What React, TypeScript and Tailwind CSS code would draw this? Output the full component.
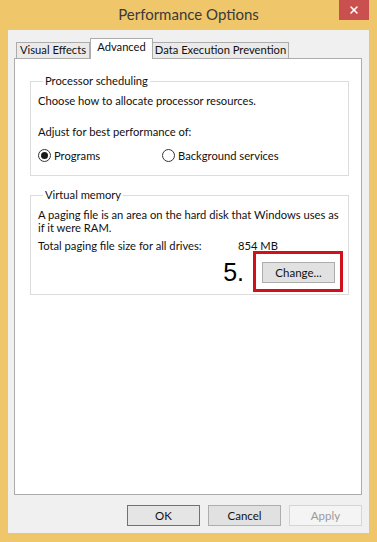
import { X } from 'lucide-react';

const font = { fontFamily: 'Lato, "Noto Sans", sans-serif' };

function Radio({ checked, label }: { checked?: boolean; label: string }) {
  return (
    <div className="flex items-center gap-[3px]">
      <span className="w-[13px] h-[13px] rounded-full border border-[#333] bg-white flex items-center justify-center">
        {checked && <span className="w-[7px] h-[7px] rounded-full bg-[#1a1a1a]" />}
      </span>
      <span>{label}</span>
    </div>
  );
}

function Btn({ children, primary, disabled }: { children: React.ReactNode; primary?: boolean; disabled?: boolean }) {
  return (
    <button
      className={
        'w-[73px] h-[21px] text-[11.5px] leading-none border ' +
        (primary
          ? 'border-[#3c7fb1] bg-[#e5e5e5] text-[#111]'
          : disabled
            ? 'border-[#d5d5d5] bg-[#f4f4f4] text-[#9a9a9a]'
            : 'border-[#adadad] bg-[#e1e1e1] text-[#111]')
      }
    >
      {children}
    </button>
  );
}

export default function App() {
  return (
    <div className="w-[377px] h-[542px] bg-[#efc66a] flex flex-col text-[11.2px] text-[#111] whitespace-nowrap" style={font}>
      <div className="h-[30px] relative flex items-center justify-center">
        <span className="text-[15px] text-[#3a3a3a] pb-[1px]">Performance Options</span>
        <div className="absolute right-[8px] top-0 w-[30px] h-[20px] bg-[#c9504f] flex items-center justify-center">
          <X className="w-[12px] h-[12px] text-white" strokeWidth={3} />
        </div>
      </div>

      <div className="flex-1 mx-[8px] mb-[9px] bg-[#f0f0f0] flex flex-col pl-[6px] pr-[7px] pt-[8px]">
        <div className="flex items-end pl-[2px] h-[20px]">
          <div className="w-[74px] h-[16px] border border-b-0 border-[#acacac] bg-[#eaeaea] flex items-center justify-center">
            Visual Effects
          </div>
          <div className="w-[63px] h-[21px] -mb-[1px] border border-b-0 border-[#acacac] bg-white flex items-center justify-center pb-[3px] relative z-10">
            Advanced
          </div>
          <div className="w-[136px] h-[16px] border border-b-0 border-l-0 border-[#acacac] bg-[#eaeaea] flex items-center justify-center">
            Data Execution Prevention
          </div>
        </div>

        <div className="h-[437px] border border-[#acacac] bg-white pl-[15px] pr-[12px] pt-[15px]">
          <fieldset className="min-w-0 border border-[#dcdcdc] h-[102px] pl-[7px] pr-[7px]">
            <legend className="ml-[5px] px-[2px] leading-[14px]">Processor scheduling</legend>
            <div className="mt-[5px] leading-[15px]">Choose how to allocate processor resources.</div>
            <div className="mt-[16px] leading-[15px]">Adjust for best performance of:</div>
            <div className="mt-[9px] flex items-center leading-[15px]">
              <div className="w-[124px]">
                <Radio checked label="Programs" />
              </div>
              <Radio label="Background services" />
            </div>
          </fieldset>

          <fieldset className="min-w-0 border border-[#dcdcdc] mt-[12px] h-[107px] pl-[7px] pr-[4px]">
            <legend className="ml-[5px] px-[2px] leading-[14px]">Virtual memory</legend>
            <div className="mt-[6px] leading-[13px]">
              A paging file is an area on the hard disk that Windows uses as
              <br />
              if it were RAM.
            </div>
            <div className="mt-[4px] flex leading-[15px]">
              <span className="w-[200px]">Total paging file size for all drives:</span>
              <span>854 MB</span>
            </div>
            <div className="flex items-end justify-end pr-[1px] -mt-[2px]">
              <span
                className="text-[25px] leading-none text-black mr-[9px] mb-[7px]"
                style={{ fontFamily: '"Liberation Sans", Arial, sans-serif' }}
              >
                5.
              </span>
              <div className="w-[90px] h-[41px] border-[3px] border-[#d2101a] pl-[6px] pt-[8px]">
                <Btn>Change...</Btn>
              </div>
            </div>
          </fieldset>
        </div>

        <div className="flex justify-end gap-[8px] mt-[10px]">
          <Btn primary>OK</Btn>
          <Btn>Cancel</Btn>
          <Btn disabled>Apply</Btn>
        </div>
      </div>
    </div>
  );
}
